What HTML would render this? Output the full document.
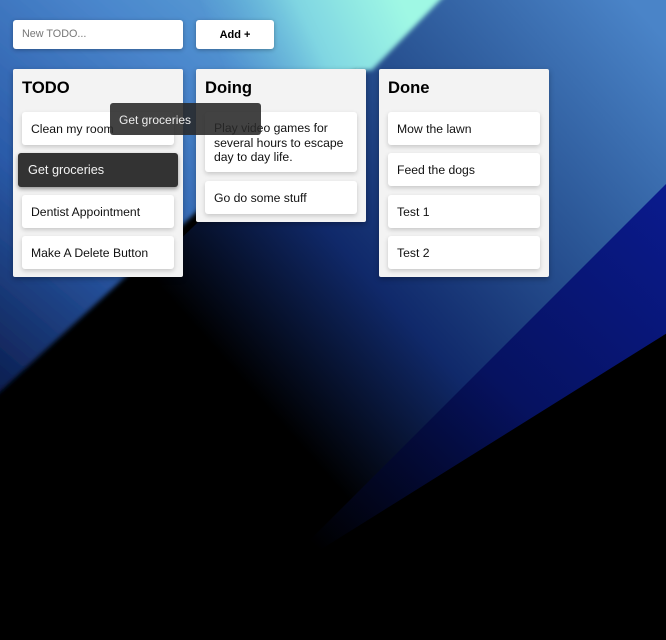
<!DOCTYPE html>
<html><head><meta charset="utf-8"><style>
html,body{margin:0;padding:0;width:666px;height:640px;overflow:hidden;background:#000;font-family:"Liberation Sans",Arial,sans-serif}
#bg{position:absolute;left:0;top:0;display:block}
.abs{position:absolute}
.input{left:13px;top:20px;width:170px;height:29px;background:#fff;border-radius:3px;box-shadow:0 1px 4px rgba(0,0,0,.3);font-size:10.8px;color:#777;line-height:29px;padding-left:9px;box-sizing:border-box}
.btn{left:196px;top:20px;width:78px;height:29px;background:#fff;border-radius:3px;box-shadow:0 1px 4px rgba(0,0,0,.3);font-size:11px;font-weight:bold;line-height:30px;text-align:center;color:#000}
.col{background:#f3f3f3;border-radius:2px;box-shadow:0 2px 6px rgba(0,0,0,.3);width:170px;top:69px}
.col h2{margin:0;position:absolute;left:9px;top:9px;font-size:16.6px;font-weight:bold;color:#000}
.card{position:absolute;left:9px;width:152px;background:#fff;border-radius:3px;box-shadow:0 2px 5px rgba(0,0,0,.18);font-size:12.2px;color:#111;padding:10px 9px;box-sizing:border-box;line-height:14.5px;height:33px}
.drag{background:#333;color:#f2f2f2;left:5px;width:160px;height:34px;box-shadow:0 2px 4px rgba(0,0,0,.4);font-size:12.7px;padding:10px 10px}
.ghost{left:110px;top:103px;width:151px;height:32px;background:rgba(40,40,40,.88);border-radius:3px;color:#eee;font-size:12px;padding:10px 9px;box-sizing:border-box;line-height:14px}
</style></head><body>
<svg id="bg" width="666" height="640" viewBox="0 0 666 640">
<defs>
<filter id="b" x="-5%" y="-5%" width="110%" height="110%"><feGaussianBlur stdDeviation="2.5"/></filter>
<linearGradient id="gt" gradientUnits="userSpaceOnUse" x1="0" y1="390" x2="330" y2="0">
<stop offset="0" stop-color="#0c1e50"/><stop offset="0.35" stop-color="#2a5aa8"/><stop offset="0.7" stop-color="#4a86cc"/><stop offset="1" stop-color="#5fa8d8"/></linearGradient>
<linearGradient id="gm" gradientUnits="userSpaceOnUse" x1="230" y1="80" x2="400" y2="0">
<stop offset="0" stop-color="#60b0d8" stop-opacity="0"/><stop offset="0.5" stop-color="#80d6e2"/><stop offset="1" stop-color="#9ff8e4"/></linearGradient>
<linearGradient id="gb" gradientUnits="userSpaceOnUse" x1="666" y1="40" x2="260" y2="400">
<stop offset="0" stop-color="#4a84c8"/><stop offset="0.35" stop-color="#2c5898"/><stop offset="0.7" stop-color="#10296a"/><stop offset="1" stop-color="#000"/></linearGradient>
<linearGradient id="gn" gradientUnits="userSpaceOnUse" x1="666" y1="200" x2="330" y2="560">
<stop offset="0" stop-color="#0a1a8c"/><stop offset="0.5" stop-color="#061260"/><stop offset="1" stop-color="#000"/></linearGradient>
</defs>
<rect width="666" height="640" fill="#000"/>
<polygon points="680,170 680,325 -400,1000 -400,1000" fill="url(#gn)"/>
<polygon points="437,-10 680,-10 680,170 -500,1350 -500,900" fill="url(#gb)"/>
<polygon points="-20,-20 450,-20 -20,410" fill="url(#gt)" filter="url(#b)"/>
<polygon points="200,-10 450,-10 372,70 230,80" fill="url(#gm)" filter="url(#b)"/>
</svg>

<div class="abs input">New TODO...</div>
<div class="abs btn">Add +</div>

<div class="abs col" style="left:13px;height:208px">
<h2>TODO</h2>
<div class="card" style="top:43px">Clean my room</div>
<div class="card drag" style="top:84px">Get groceries</div>
<div class="card" style="top:126px">Dentist Appointment</div>
<div class="card" style="top:167px">Make A Delete Button</div>
</div>

<div class="abs col" style="left:196px;height:153px">
<h2>Doing</h2>
<div class="card" style="top:43px;height:60px;padding-top:9px">Play video games for<br>several hours to escape<br>day to day life.</div>
<div class="card" style="top:112px">Go do some stuff</div>
</div>

<div class="abs col" style="left:379px;height:208px">
<h2>Done</h2>
<div class="card" style="top:43px">Mow the lawn</div>
<div class="card" style="top:84px">Feed the dogs</div>
<div class="card" style="top:126px">Test 1</div>
<div class="card" style="top:167px">Test 2</div>
</div>

<div class="abs ghost">Get groceries</div>
</body></html>
